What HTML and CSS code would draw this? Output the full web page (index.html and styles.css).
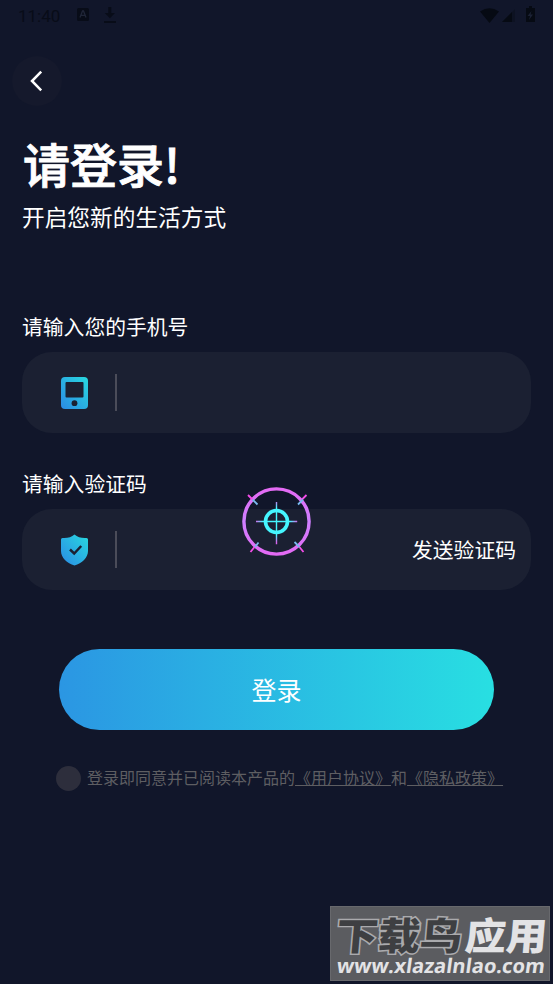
FILE: index.html
```html
<!DOCTYPE html>
<html lang="zh-CN">
<head>
<meta charset="utf-8">
<title>登录</title>
<link rel="stylesheet" href="styles.css">
</head>
<body>
<header class="status">
  <span class="time">11:40</span>
  <svg class="app" width="12" height="13" viewBox="0 0 12 13"><rect width="12" height="13" rx="1.5" fill="#080c18"/><path d="M3 9.5 5.5 3h1L9 9.5M4 7.3h4" fill="none" stroke="#202638" stroke-width="1.3"/></svg>
  <svg class="download" width="12" height="16" viewBox="0 0 12 16"><path d="M4.3 0h3v6H11l-5.1 5.2L.8 6h3.5zM0 14h12v2H0z" fill="#080c18"/></svg>
  <svg class="signals" width="56" height="17" viewBox="0 0 56 17"><path d="M0 4.5Q9.500-2 19 4.500L9.500 16z" fill="#060a13"/><path d="M22 15 35 2v13z" fill="#0d1222"/><path d="M22 15 32 5v10z" fill="#060a13"/><path d="M49-1h3v2h3v14h-9V1h3z" fill="#060a13"/><path d="m51.500 4-4 5h2.500l-1 4 4-5.500h-2.500z" fill="#1b2134"/></svg>
</header>
<main class="page">
  <button class="back" aria-label="返回"><svg width="14" height="22" viewBox="0 0 14 22"><path d="M11.200 1.700 2 11l9.200 9.300" fill="none" stroke="#fff" stroke-width="2.500"/></svg></button>
  <h1>请登录!</h1>
  <p class="subtitle">开启您新的生活方式</p>
  <section class="group">
    <label>请输入您的手机号</label>
    <div class="field">
      <svg class="icon" width="27" height="32" viewBox="0 0 27 32"><defs><linearGradient id="blue" x1="0" y1="1" x2="1" y2="0"><stop stop-color="#2b8ae5"/><stop offset="1" stop-color="#28d9df"/></linearGradient></defs><rect width="27" height="32" rx="4" fill="url(#blue)"/><rect x="4.500" y="5" width="18" height="15.500" rx="1" fill="#1b2032"/><circle cx="13.500" cy="26.200" r="2.900" fill="#1b2032"/></svg>
      <i class="divider"></i>
    </div>
  </section>
  <section class="group">
    <label>请输入验证码</label>
    <div class="field">
      <svg class="icon" width="27" height="32" viewBox="0 0 27 32"><path d="M13.500.5Q18 4.500 25.500 4q1.500 0 1.500 1.500V17c0 7-6 12-13.500 14.500C6 29 0 24 0 17V5.500Q0 4 1.500 4 9 4.500 13.500.5z" fill="url(#blue)"/><path d="m9 15.500 4.200 4 7-7.500" fill="none" stroke="#1b2032" stroke-width="2.500"/></svg>
      <i class="divider"></i>
      <span class="send">发送验证码</span>
    </div>
  </section>
  <button class="login"><span>登录</span></button>
  <div class="terms"><i class="check"></i><span>登录即同意并已阅读本产品的<u>《用户协议》</u>和<u>《隐私政策》</u></span></div>
</main>
<svg class="target" width="70" height="70" viewBox="0 0 70 70">
  <defs><radialGradient id="cross" gradientUnits="userSpaceOnUse" cx="35.500" cy="35.500" r="21"><stop offset=".65" stop-color="#45f6ff"/><stop offset="1" stop-color="#d963ee"/></radialGradient><linearGradient id="ring" x1="0" y1="0" x2="0" y2="1"><stop stop-color="#e46af4"/><stop offset=".5" stop-color="#cf80ff"/><stop offset="1" stop-color="#e46af4"/></linearGradient></defs>
  <circle cx="35.500" cy="35.500" r="32.600" fill="none" stroke="url(#ring)" stroke-width="3.400"/>
  <g fill="none" stroke-width="1.800"><path d="m7 9 5 5M65.500 9l-5 5M9.500 66l4-5M62.500 66l-4-5" stroke="#f44ee9"/><path d="m11.500 13.500 5 5M62 13.500l-5 5M14 61l3.500-4.500M58.500 61l-5-5" stroke="#79b9ee"/></g>
  <circle cx="35.500" cy="35.500" r="11" fill="none" stroke="#45f6ff" stroke-width="3.600"/>
  <path d="M34.800 16h1.400v18.800h20v1.400h-20v22h-1.400v-22H15v-1.400h19.800z" fill="url(#cross)"/>
</svg>
<aside class="mark">
  <svg width="220" height="75" viewBox="0 0 220 75">
    <g class="mark-name" transform="translate(5 44) skewX(-5)"><text class="dark" textLength="126" lengthAdjust="spacingAndGlyphs">下载鸟</text><text class="light" x="129" textLength="82" lengthAdjust="spacingAndGlyphs">应用</text></g>
    <text class="url" transform="translate(6 67) skewX(-8)" textLength="208" lengthAdjust="spacingAndGlyphs">www.xlazalnlao.com</text>
  </svg>
</aside>
</body>
</html>
```
FILE: styles.css
```css
* { box-sizing: border-box; }
body { margin: 0; width: 553px; height: 984px; overflow: hidden; position: relative; background: #11162a; color: #fff; font-family: "Noto Sans CJK SC", sans-serif; }
button { border: 0; padding: 0; color: inherit; font: inherit; }
svg { display: block; flex: none; }
.status { height: 56px; padding: 7px 17px 0 18px; display: flex; align-items: flex-start; }
.time { width: 59px; font: 17px/18px Roboto, sans-serif; color: #080c18; }
.app { margin-top: 1px; }
.download { margin-left: 15px; }
.signals { margin-left: auto; overflow: visible; }
.page { padding: 0 22px; }
.back { display: flex; align-items: center; justify-content: center; width: 50px; height: 50px; margin-left: -10px; border-radius: 50%; background: #15192c; }
h1 { margin: 27px 0 0 1px; font-size: 47px; line-height: 60px; font-weight: 500; -webkit-text-stroke: .9px #fff; }
.subtitle { margin: 8px 0 78px; font-size: 22.700px; line-height: 32px; }
.group { margin-bottom: 35px; }
.group label { display: block; height: 41px; font-size: 20.800px; line-height: 30px; }
.field { display: flex; align-items: center; height: 81px; padding: 0 15px 0 39px; border-radius: 30px; background: #1b2032; }
.divider { width: 2px; height: 37px; margin-left: 27px; background: #4b4c59; }
.send { margin: 0 0 2px auto; font-size: 20.800px; line-height: 30px; }
.login { display: block; width: 435px; height: 81px; margin: 59px auto 0; padding-bottom: 2px; border-radius: 41px; background: linear-gradient(90deg, #2b96e3, #28dfe2); font-size: 25px; }
.terms { display: flex; align-items: center; height: 26px; margin: 35px 0 0 34px; color: #5e5e62; font-size: 16px; line-height: 24px; white-space: nowrap; }
.terms span { margin-bottom: 2px; }
.check { width: 25px; height: 25px; margin-right: 6px; border-radius: 50%; background: #2d2e3c; }
u { text-underline-offset: 1px; text-decoration-thickness: 1px; text-decoration-skip-ink: none; }
.target { position: absolute; left: 241px; top: 486px; overflow: visible; }
.mark { position: absolute; left: 330px; top: 906px; width: 220px; height: 75px; background: #5b5c60; border: 1px solid #68696d; }
.mark svg { margin: -1px; }
.mark-name { font-size: 38px; font-weight: 900; }
.dark { fill: #3e3f42; stroke: #aaaaad; stroke-width: 3px; paint-order: stroke; }
.light { fill: #e3e3e5; }
.url { fill: #e3e3e5; font: 700 20px "Open Sans", sans-serif; }
```
